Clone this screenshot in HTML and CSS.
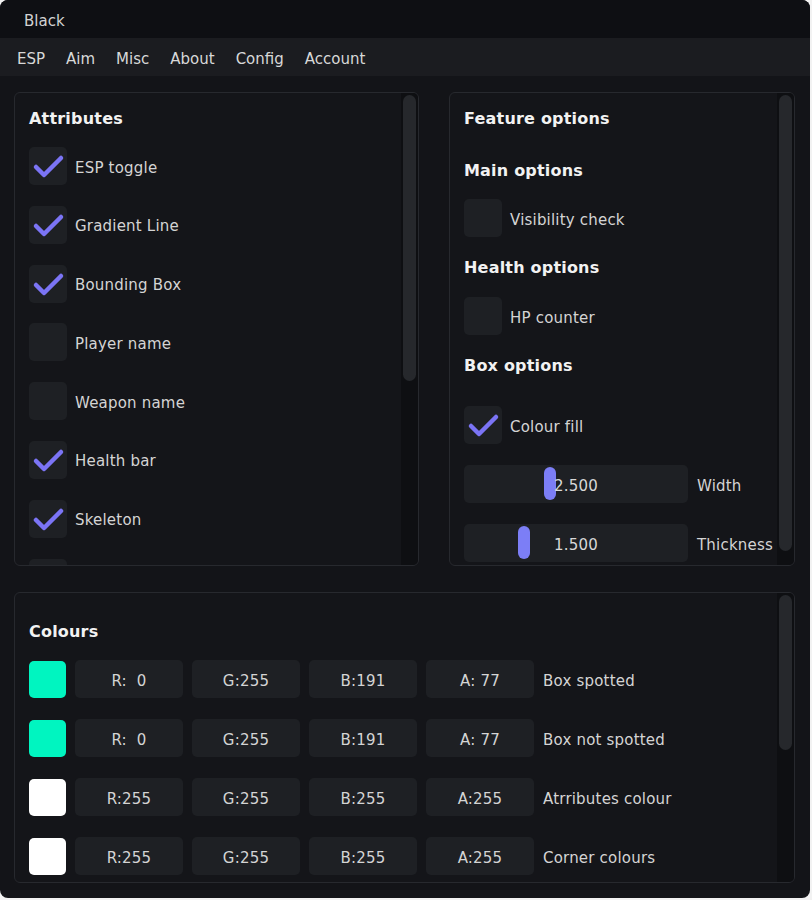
FILE: index.html
```html
<!DOCTYPE html>
<html>
<head>
  <title>Black</title>
  <link rel="stylesheet" href="styles.css">
</head>
<body>
  <div class="window">
    <div class="titlebar"><span class="label">Black</span></div>
    <div class="menubar">
      <span class="label">ESP</span>
      <span class="label">Aim</span>
      <span class="label">Misc</span>
      <span class="label">About</span>
      <span class="label">Config</span>
      <span class="label">Account</span>
    </div>

    <div class="main">
      <div class="top-row">
        <!-- Attributes -->
        <div class="panel panel-attr">
          <div class="panel-body">
            <h2>Attributes</h2>
            <div class="check-list">
              <div class="check-row"><span class="box on"><svg viewBox="0 0 38 38"><polyline points="7,20 15,28 32,11"/></svg></span><span class="label">ESP toggle</span></div>
              <div class="check-row"><span class="box on"><svg viewBox="0 0 38 38"><polyline points="7,20 15,28 32,11"/></svg></span><span class="label">Gradient Line</span></div>
              <div class="check-row"><span class="box on"><svg viewBox="0 0 38 38"><polyline points="7,20 15,28 32,11"/></svg></span><span class="label">Bounding Box</span></div>
              <div class="check-row"><span class="box"></span><span class="label">Player name</span></div>
              <div class="check-row"><span class="box"></span><span class="label">Weapon name</span></div>
              <div class="check-row"><span class="box on"><svg viewBox="0 0 38 38"><polyline points="7,20 15,28 32,11"/></svg></span><span class="label">Health bar</span></div>
              <div class="check-row"><span class="box on"><svg viewBox="0 0 38 38"><polyline points="7,20 15,28 32,11"/></svg></span><span class="label">Skeleton</span></div>
              <div class="check-row"><span class="box"></span></div>
            </div>
          </div>
          <div class="scrollbar"><div class="grab" style="height: 286px"></div></div>
        </div>

        <!-- Feature options -->
        <div class="panel panel-feature">
          <div class="panel-body">
            <h2>Feature options</h2>
            <h3 class="sub-main">Main options</h3>
            <div class="check-row row-gap-sm"><span class="box"></span><span class="label">Visibility check</span></div>
            <h3 class="sub">Health options</h3>
            <div class="check-row row-gap-md"><span class="box"></span><span class="label">HP counter</span></div>
            <h3 class="sub">Box options</h3>
            <div class="check-row row-gap-lg"><span class="box on"><svg viewBox="0 0 38 38"><polyline points="7,20 15,28 32,11"/></svg></span><span class="label">Colour fill</span></div>
            <div class="slider-row">
              <div class="slider"><span class="slider-grab" style="left: 80px"></span><span class="slider-value label">2.500</span></div>
              <span class="label">Width</span>
            </div>
            <div class="slider-row">
              <div class="slider"><span class="slider-grab" style="left: 54px"></span><span class="slider-value label">1.500</span></div>
              <span class="label">Thickness</span>
            </div>
          </div>
          <div class="scrollbar"><div class="grab" style="height: 456px"></div></div>
        </div>
      </div>

      <!-- Colours -->
      <div class="panel panel-colours">
        <div class="panel-body">
          <h2>Colours</h2>
          <div class="colour-list">
            <div class="colour-row">
              <span class="swatch swatch-teal"></span>
              <span class="field"><span class="label">R:  0</span></span>
              <span class="field"><span class="label">G:255</span></span>
              <span class="field"><span class="label">B:191</span></span>
              <span class="field"><span class="label">A: 77</span></span>
              <span class="label">Box spotted</span>
            </div>
            <div class="colour-row">
              <span class="swatch swatch-teal"></span>
              <span class="field"><span class="label">R:  0</span></span>
              <span class="field"><span class="label">G:255</span></span>
              <span class="field"><span class="label">B:191</span></span>
              <span class="field"><span class="label">A: 77</span></span>
              <span class="label">Box not spotted</span>
            </div>
            <div class="colour-row">
              <span class="swatch swatch-white"></span>
              <span class="field"><span class="label">R:255</span></span>
              <span class="field"><span class="label">G:255</span></span>
              <span class="field"><span class="label">B:255</span></span>
              <span class="field"><span class="label">A:255</span></span>
              <span class="label">Atrributes colour</span>
            </div>
            <div class="colour-row">
              <span class="swatch swatch-white"></span>
              <span class="field"><span class="label">R:255</span></span>
              <span class="field"><span class="label">G:255</span></span>
              <span class="field"><span class="label">B:255</span></span>
              <span class="field"><span class="label">A:255</span></span>
              <span class="label">Corner colours</span>
            </div>
          </div>
        </div>
        <div class="scrollbar"><div class="grab" style="height: 155px"></div></div>
      </div>
    </div>
  </div>
</body>
</html>
```

FILE: styles.css
```css
:root {
  --title-bg: #0e0f13;
  --menu-bg: #1b1c20;
  --window-bg: #131418;
  --panel-bg: #141519;
  --panel-border: #27292e;
  --frame-bg: #1e2024;
  --track-bg: #0e0f12;
  --grab-bg: #26282c;
  --accent: #7b74f5;
  --slider-grab: #7c7ef6;
  --text: #d4d4d4;
  --heading: #f2f2f2;
}

html, body {
  margin: 0;
  padding: 0;
  background-color: #f2f2f2;
}

body {
  font-family: 'DejaVu Sans', 'Liberation Sans', sans-serif;
  font-size: 15px;
  line-height: 20px;
  letter-spacing: 0.2px;
  color: var(--text);
}

/* text sits a little low in the frames, like the original renderer */
.label {
  padding-top: 3px;
}

.window {
  width: 810px;
  height: 898px;
  background-color: var(--window-bg);
  border-radius: 8px;
  overflow: hidden;
  display: flex;
  flex-direction: column;
}

/* title + menu */
.titlebar {
  height: 38px;
  flex-shrink: 0;
  background-color: var(--title-bg);
  padding-left: 24px;
  display: flex;
  align-items: center;
  color: #d2d2d2;
  letter-spacing: 0;
}

.menubar {
  height: 38px;
  flex-shrink: 0;
  background-color: var(--menu-bg);
  padding-left: 17px;
  display: flex;
  align-items: center;
  gap: 21px;
  color: #d8d8d8;
  letter-spacing: 0;
}

.menubar .label {
  padding-top: 4px;
}

.main {
  flex: 1;
  padding: 16px 15px 15px 14px;
  display: flex;
  flex-direction: column;
  gap: 26px;
}

.top-row {
  display: flex;
  gap: 30px;
  height: 474px;
}

/* panels */
.panel {
  box-sizing: border-box;
  border: 1px solid var(--panel-border);
  border-radius: 6px;
  background-color: var(--panel-bg);
  overflow: hidden;
  display: flex;
}

.panel-attr { width: 405px; }
.panel-feature { width: 346px; }
.panel-colours { height: 291px; }

.panel-body {
  flex: 1;
  min-width: 0;
  padding: 15px 0 0 14px;
  overflow: hidden;
  white-space: nowrap;
}

.panel-colours .panel-body {
  padding-top: 28px;
}

.scrollbar {
  width: 17px;
  flex-shrink: 0;
  background-color: var(--track-bg);
  box-sizing: border-box;
  padding: 2px 2px 0 2px;
}

.grab {
  background-color: var(--grab-bg);
  border-radius: 7px;
}

h2, h3 {
  margin: 0;
  padding-top: 1px;
  height: 20px;
  box-sizing: border-box;
  font-size: 16px;
  line-height: 20px;
  font-weight: bold;
  color: var(--heading);
}

.sub-main { margin-top: 32px; }
.sub { margin-top: 20px; }

/* checkboxes */
.check-list {
  margin-top: 19px;
  display: flex;
  flex-direction: column;
  gap: 20.8px;
}

.check-row {
  display: flex;
  align-items: center;
  gap: 8px;
  height: 38px;
}

.row-gap-sm { margin-top: 19px; }
.row-gap-md { margin-top: 20px; }
.row-gap-lg { margin-top: 31px; }

.box {
  width: 38px;
  height: 38px;
  flex-shrink: 0;
  border-radius: 5px;
  background-color: var(--frame-bg);
}

.box svg {
  display: block;
  width: 38px;
  height: 38px;
}

.box polyline {
  fill: none;
  stroke: var(--accent);
  stroke-width: 4.5;
  stroke-linecap: round;
  stroke-linejoin: round;
}

/* sliders */
.slider-row {
  margin-top: 21px;
  display: flex;
  align-items: center;
  gap: 9px;
}

.slider {
  position: relative;
  width: 224px;
  height: 38px;
  flex-shrink: 0;
  border-radius: 5px;
  background-color: var(--frame-bg);
  display: flex;
  align-items: center;
  justify-content: center;
}

.slider-grab {
  position: absolute;
  top: 2px;
  width: 12px;
  height: 33px;
  border-radius: 6px;
  background-color: var(--slider-grab);
}

.slider-value {
  position: relative;
  color: #d8d8d8;
}

/* colours */
.colour-list {
  margin-top: 19px;
  display: flex;
  flex-direction: column;
  gap: 21px;
}

.colour-row {
  display: flex;
  align-items: center;
  gap: 9px;
  height: 38px;
}

.swatch {
  width: 37px;
  height: 37px;
  flex-shrink: 0;
  border-radius: 5px;
}

.swatch-teal { background-color: #00f5c0; }
.swatch-white { background-color: #ffffff; }

.field {
  width: 108px;
  height: 38px;
  flex-shrink: 0;
  border-radius: 5px;
  background-color: var(--frame-bg);
  display: flex;
  align-items: center;
  justify-content: center;
  white-space: pre;
  color: #d4d4d4;
}
```
